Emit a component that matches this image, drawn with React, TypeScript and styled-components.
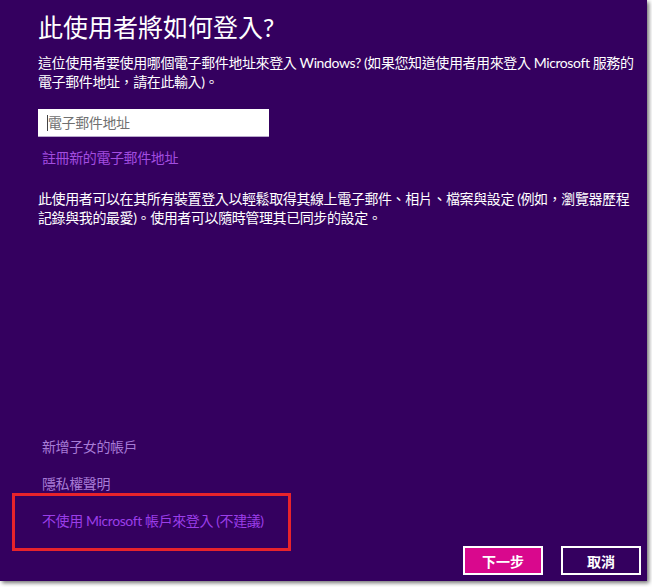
import styled, { createGlobalStyle } from 'styled-components'

const GlobalStyle = createGlobalStyle`
  html, body {
    margin: 0;
    padding: 0;
    background: #ffffff;
  }
  body {
    font-family: "Lato", "Noto Sans CJK TC", sans-serif;
  }
`;

const Frame = styled.div`
  width: 652px;
  height: 587px;
  background: #ffffff;
`;

const Panel = styled.div`
  display: flex;
  flex-direction: column;
  box-sizing: border-box;
  width: 647px;
  height: 581px;
  padding: 12px 6px 6px 38px;
  background: #34005f;
  color: #ffffff;
  box-shadow: 2px 2px 4px rgba(0, 0, 0, 0.55);
`;

const Title = styled.h1`
  margin: 0;
  font-size: 25px;
  line-height: 30px;
  font-weight: 400;
`;

const Text = styled.p<{ $top: number }>`
  margin: ${(p) => p.$top}px 0 0;
  max-width: 596px;
  font-size: 14px;
  line-height: 19px;
  letter-spacing: -0.4px;
  color: #ffffff;
`;

const InputWrap = styled.div`
  position: relative;
  width: 231px;
  margin-top: 18px;
`;

const EmailInput = styled.input`
  display: block;
  box-sizing: border-box;
  width: 100%;
  height: 28px;
  padding: 0 0 0 10px;
  border: none;
  border-bottom: 1px solid #b9a9cc;
  outline: none;
  background: #ffffff;
  font-family: inherit;
  font-size: 14px;
  letter-spacing: -0.4px;
  color: #222222;
  &::placeholder {
    color: #707070;
  }
`;

const Caret = styled.span`
  position: absolute;
  left: 9px;
  top: 6px;
  width: 1px;
  height: 16px;
  background: #444444;
`;

const Link = styled.a<{ $color?: string }>`
  display: block;
  align-self: flex-start;
  font-size: 14px;
  line-height: 20px;
  letter-spacing: -0.4px;
  color: ${(p) => p.$color || '#a77bd6'};
  text-decoration: none;
  cursor: pointer;
  margin-left: 4px;
`;

const RegisterLink = styled(Link)`
  margin-top: 11px;
`;

const Spacer = styled.div`
  flex: 1;
`;

const LinkList = styled.div`
  display: flex;
  flex-direction: column;
  gap: 17px;
`;

const Highlighted = styled(Link)`
  position: relative;
  &::after {
    content: '';
    position: absolute;
    left: -30px;
    top: -18px;
    width: 279px;
    height: 58px;
    box-sizing: border-box;
    border: 3px solid #e8232b;
    pointer-events: none;
  }
`;

const ButtonRow = styled.div`
  display: flex;
  justify-content: flex-end;
  gap: 18px;
  margin-top: 15px;
`;

const Button = styled.button<{ $primary?: boolean }>`
  box-sizing: border-box;
  width: 80px;
  height: 29px;
  border: 2px solid #ffffff;
  background: ${(p) => (p.$primary ? '#d9088d' : '#34005f')};
  color: #ffffff;
  font-family: inherit;
  font-size: 14px;
  font-weight: 700;
  cursor: pointer;
`;

export default function App() {
  return (
    <Frame>
      <GlobalStyle />
      <Panel>
        <Title>此使用者將如何登入?</Title>
        <Text $top={11}>
          這位使用者要使用哪個電子郵件地址來登入 Windows? (如果您知道使用者用來登入 Microsoft 服務的電子郵件地址，請在此輸入)。
        </Text>
        <InputWrap>
          <EmailInput placeholder="電子郵件地址" />
          <Caret />
        </InputWrap>
        <RegisterLink $color="#a34de0">註冊新的電子郵件地址</RegisterLink>
        <Text $top={21}>
          此使用者可以在其所有裝置登入以輕鬆取得其線上電子郵件、相片、檔案與設定 (例如，瀏覽器歷程記錄與我的最愛)。使用者可以隨時管理其已同步的設定。
        </Text>
        <Spacer />
        <LinkList>
          <Link>新增子女的帳戶</Link>
          <Link>隱私權聲明</Link>
          <Highlighted $color="#9b3ee8">不使用 Microsoft 帳戶來登入 (不建議)</Highlighted>
        </LinkList>
        <ButtonRow>
          <Button $primary>下一步</Button>
          <Button>取消</Button>
        </ButtonRow>
      </Panel>
    </Frame>
  )
}
